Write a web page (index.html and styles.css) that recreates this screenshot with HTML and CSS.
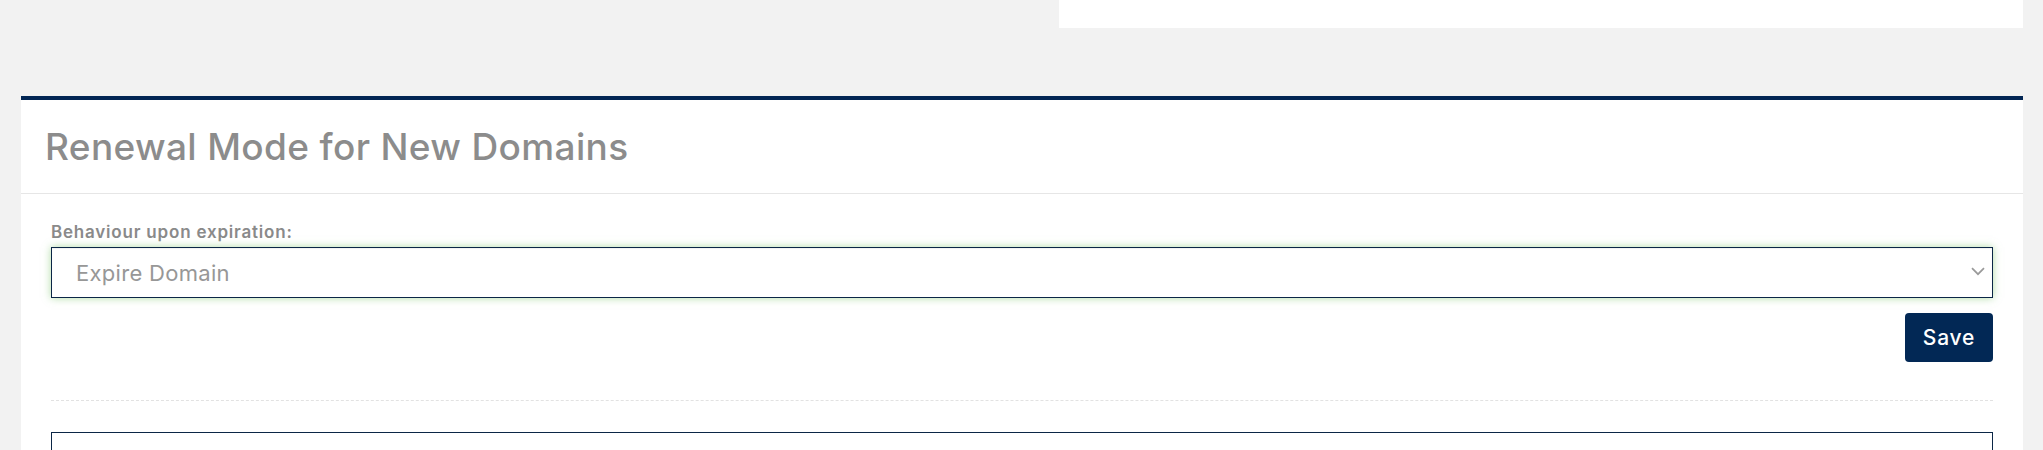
FILE: index.html
```html
<!DOCTYPE html>
<html lang="en">
<head>
<meta charset="utf-8">
<title>Renewal Mode for New Domains</title>
<link rel="stylesheet" href="styles.css">
</head>
<body>
<div class="page">
  <div class="top-row">
    <div class="top-left"></div>
    <div class="top-panel"></div>
  </div>
  <section class="card">
    <header class="card-header">
      <h2 class="card-title">Renewal Mode for New Domains</h2>
    </header>
    <div class="card-body">
      <label class="field-label">Behaviour upon expiration:</label>
      <div class="select-box">
        <span class="select-value">Expire Domain</span>
        <svg class="chevron" width="14" height="9" viewBox="0 0 14 9" aria-hidden="true">
          <path d="M1 1.2 L7 7.2 L13 1.2" fill="none" stroke="#9a9a9a" stroke-width="1.7"/>
        </svg>
      </div>
      <div class="actions">
        <button class="btn-save" type="button">Save</button>
      </div>
      <div class="dashed-sep"></div>
      <div class="next-box"></div>
    </div>
  </section>
</div>
</body>
</html>
```

FILE: styles.css
```css
html, body {
  margin: 0;
  padding: 0;
}
body {
  background: #f2f2f2;
  font-family: Inter, "Open Sans", sans-serif;
  overflow: hidden;
}
.page {
  padding: 0 20px 0 21px;
}
.top-row {
  display: grid;
  grid-template-columns: 1fr 964px;
}
.top-panel {
  height: 28px;
  background: #ffffff;
}
.card {
  margin-top: 68px;
  background: #ffffff;
  border-top: 4px solid #022654;
}
.card-header {
  padding: 23px 24px 22px;
  border-bottom: 1px solid #e6e6e6;
}
.card-title {
  margin: 0;
  font-size: 37px;
  line-height: 48px;
  font-weight: 500;
  color: #8c8c8c;
  letter-spacing: 0.35px;
}
.card-body {
  padding: 28px 30px 0;
  display: flex;
  flex-direction: column;
}
.field-label {
  font-size: 17px;
  line-height: 21px;
  font-weight: 600;
  color: #8a8a8a;
  letter-spacing: 0.8px;
}
.select-box {
  margin-top: 4px;
  height: 49px;
  border: 1px solid #0b2646;
  display: flex;
  align-items: center;
  justify-content: space-between;
  padding: 0 7px 0 24px;
  box-shadow: inset 0 1px 1px rgba(0,0,0,0.06), 0 0 8px rgba(110, 190, 90, 0.55);
}
.select-value {
  font-size: 22px;
  color: #979797;
  letter-spacing: 0.3px;
}
.chevron {
  display: block;
  margin-top: -2px;
}
.actions {
  display: flex;
  justify-content: flex-end;
  margin-top: 15px;
}
.btn-save {
  width: 88px;
  height: 49px;
  border: none;
  border-radius: 4px;
  background: #022855;
  color: #ffffff;
  font-family: Inter, "Open Sans", sans-serif;
  font-size: 21px;
  font-weight: 500;
  letter-spacing: 0.8px;
  padding: 0;
}
.dashed-sep {
  margin-top: 38px;
  border-top: 1px dashed #e2e2e2;
}
.next-box {
  margin-top: 31px;
  height: 60px;
  border: 1px solid #0b2646;
}
```
